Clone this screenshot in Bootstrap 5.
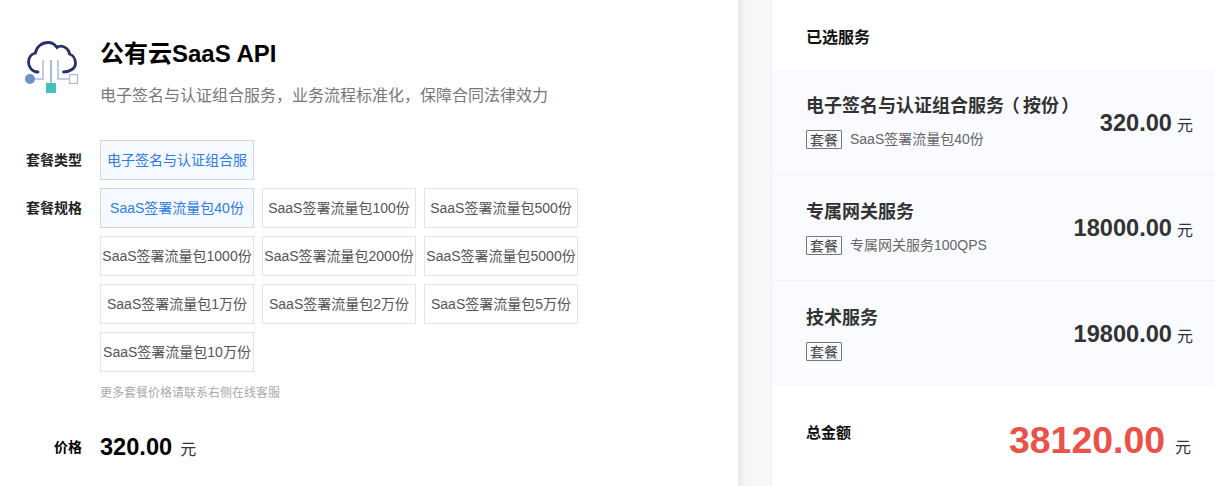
<!DOCTYPE html>
<html lang="zh-CN"><head><meta charset="utf-8"><title>公有云SaaS API</title>
<link rel="stylesheet" href="https://cdn.jsdelivr.net/npm/bootstrap@5.3.0/dist/css/bootstrap.min.css">
<style>
html,body{height:486px;overflow:hidden}
body{background:#fff;color:#333;font-family:"Liberation Sans","Noto Sans CJK SC",sans-serif;font-size:14px}
.shell{height:486px}
.left-pane{width:738px;flex:none;padding-top:38px}
.gutter{width:34px;flex:none;background:linear-gradient(to right,#e9eaee 0,#f5f6f8 8px,#f7f8fa 100%);border-right:1px solid #eeeff2}
.right-pane{flex:1 1 auto;min-width:0}
.head-row{height:64px;margin-left:25px}
.logo{width:53px;height:55px;flex:none;margin-right:22px;margin-top:2px}
.prod-title{font-size:24px;font-weight:700;color:#000;line-height:32px;margin:0}
.prod-sub{font-size:16px;color:#777;line-height:22px;margin:13px 0 0}
.punct{font-family:"Noto Sans CJK TC",sans-serif}
.type-row{margin-top:38px}
.lbl{width:82px;flex:none;margin-right:18px;text-align:right;font-size:14px;font-weight:700;color:#222;line-height:40px}
.opts{width:486px;gap:8px}
.opt{width:154px;height:40px;border:1px solid #e4e4e4;background:#fff;color:#555;font-size:14px;line-height:38px;text-align:center;white-space:nowrap;overflow:hidden}
.opt.sel{border-color:#c9d8f2;background:#f6f9ff;color:#2f7be5}
.spec-row{margin-top:8px}
.tip{margin:12px 0 0 100px;font-size:12px;color:#aaa;line-height:18px}
.price-row{margin-top:25px;height:40px}
.lbl-price{color:#000}
.price{font-size:23.600px;font-weight:700;color:#000;line-height:40px}
.unit{font-size:16px;font-weight:400;color:#333;margin-left:8px}
.right-head{height:70px;padding:28px 0 0 34px;font-size:16px;font-weight:700;color:#111;line-height:20px}
.svc{height:105px;background:#fafbff;border-bottom:1px solid #f0f1f4;padding:0 21px 0 34px}
.svc-mid{height:106px}
.svc-last{border-bottom:0}
.svc-name{font-size:18px;font-weight:700;color:#333;line-height:24px;margin-top:25px;white-space:nowrap}
.svc-first .svc-name{margin-top:24px;margin-bottom:1px}
.paren{display:inline-block;font-feature-settings:"palt"}
.paren-l{padding:0 4px 0 6px}
.paren-r{padding:0 2px 0 3px}
.svc-meta{margin-top:12px;height:20px}
.tagbox{border:1px solid #777;border-radius:1px;font-size:14px;line-height:18px;color:#444;height:19px;width:36px;text-align:center;white-space:nowrap}
.svc-desc{font-size:14px;color:#666;margin-left:8px;line-height:19px}
.svc-price{font-size:23.600px;font-weight:700;color:#333;white-space:nowrap;margin-top:3px}
.svc-price .unit{margin-left:5px}
.total{padding:0 23px 0 34px;height:100px}
.total-lbl{font-size:15px;font-weight:700;color:#111;margin-top:37px;line-height:20px}
.total-val{font-size:37.400px;font-weight:700;color:#ea5148;line-height:44px;margin-top:32px;white-space:nowrap}
.total-val .unit{margin-left:10px}
</style></head>
<body>
<div class="shell d-flex">
  <main class="left-pane">
    <div class="head-row d-flex">
      <svg class="logo" viewBox="0 0 53 55" fill="none" aria-hidden="true">
        <path d="M13 32C7 32 3.500 27 3.500 22C3.500 17 7 14 10.500 13C11 7 17 2.500 23 2.500C27 2.500 30 4.500 32 7.500C34 5.500 38 5.500 41 8C43.500 10 44.500 12 44.500 14C48 15 50.500 19 50.500 23.500C50.500 28 46 31.500 38.500 32" stroke="#2d2f6b" stroke-width="2.800" stroke-linecap="round"/>
        <path d="M18 20V39H9" stroke="#a9bde0" stroke-width="1.500"/>
        <path d="M26 20V43" stroke="#8aa5d6" stroke-width="1.500"/>
        <path d="M33 20V39H44" stroke="#a9bde0" stroke-width="1.500"/>
        <circle cx="5" cy="39" r="5" fill="#6d90c9"/>
        <rect x="21" y="43" width="10" height="10" fill="#47bfbc"/>
        <rect x="44.600" y="34.600" width="7.800" height="8.800" fill="#fff" stroke="#a9bde0" stroke-width="1.200"/>
      </svg>
      <div>
        <h1 class="prod-title">公有云SaaS API</h1>
        <p class="prod-sub">电子签名与认证组合服务<span class="punct">，</span>业务流程标准化<span class="punct">，</span>保障合同法律效力</p>
      </div>
    </div>
    <div class="type-row d-flex">
      <div class="lbl">套餐类型</div>
      <div class="opts d-flex flex-wrap"><div class="opt sel">电子签名与认证组合服</div></div>
    </div>
    <div class="spec-row d-flex">
      <div class="lbl">套餐规格</div>
      <div class="opts d-flex flex-wrap">
        <div class="opt sel">SaaS签署流量包40份</div>
        <div class="opt">SaaS签署流量包100份</div>
        <div class="opt">SaaS签署流量包500份</div>
        <div class="opt">SaaS签署流量包1000份</div>
        <div class="opt">SaaS签署流量包2000份</div>
        <div class="opt">SaaS签署流量包5000份</div>
        <div class="opt">SaaS签署流量包1万份</div>
        <div class="opt">SaaS签署流量包2万份</div>
        <div class="opt">SaaS签署流量包5万份</div>
        <div class="opt">SaaS签署流量包10万份</div>
      </div>
    </div>
    <p class="tip">更多套餐价格请联系右侧在线客服</p>
    <div class="price-row d-flex">
      <div class="lbl lbl-price">价格</div>
      <div class="price">320.00<span class="unit">元</span></div>
    </div>
  </main>
  <div class="gutter"></div>
  <aside class="right-pane">
    <div class="right-head">已选服务</div>
    <div class="svc svc-first d-flex justify-content-between align-items-center">
      <div class="align-self-start"><div class="svc-name">电子签名与认证组合服务<span class="paren paren-l">（</span>按份<span class="paren paren-r">）</span></div><div class="svc-meta d-flex"><span class="tagbox">套餐</span><span class="svc-desc">SaaS签署流量包40份</span></div></div>
      <div class="svc-price">320.00<span class="unit">元</span></div>
    </div>
    <div class="svc svc-mid d-flex justify-content-between align-items-center">
      <div class="align-self-start"><div class="svc-name">专属网关服务</div><div class="svc-meta d-flex"><span class="tagbox">套餐</span><span class="svc-desc">专属网关服务100QPS</span></div></div>
      <div class="svc-price">18000.00<span class="unit">元</span></div>
    </div>
    <div class="svc svc-last d-flex justify-content-between align-items-center">
      <div class="align-self-start"><div class="svc-name">技术服务</div><div class="svc-meta d-flex"><span class="tagbox">套餐</span></div></div>
      <div class="svc-price">19800.00<span class="unit">元</span></div>
    </div>
    <div class="total d-flex justify-content-between">
      <div class="total-lbl">总金额</div>
      <div class="total-val">38120.00<span class="unit">元</span></div>
    </div>
  </aside>
</div>
</body></html>
